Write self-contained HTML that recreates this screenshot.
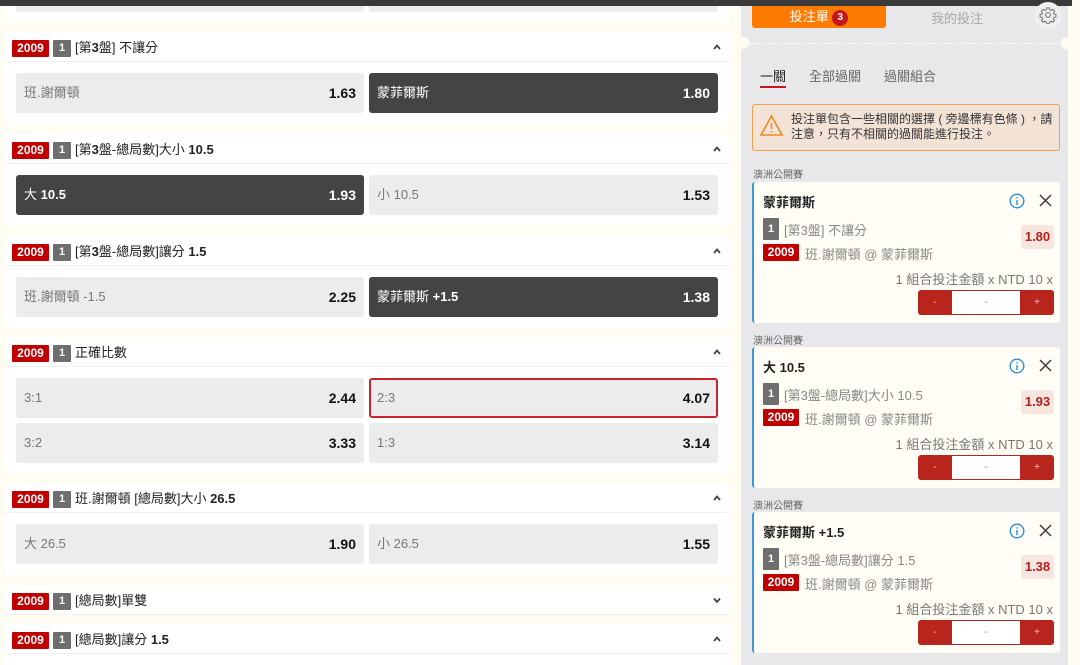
<!DOCTYPE html>
<html><head><meta charset="utf-8"><style>
*{box-sizing:border-box;margin:0;padding:0}
body{width:1080px;height:665px;overflow:hidden;background:#fffcf2;font-family:"Liberation Sans","Noto Sans CJK TC",sans-serif;position:relative}
.a{position:absolute}
.topbar{left:0;top:0;width:1072px;height:6px;background:#3a3a3a;z-index:5}
.panel{position:absolute;left:5px;width:724px;background:#fff}
.hdr{position:absolute;left:0;top:0;width:724px;height:30px;border-bottom:1px solid #f0f0f2}
.b09{position:absolute;left:7px;top:8px;width:37px;height:17px;background:#c00000;color:#fff;font-size:12px;font-weight:bold;text-align:center;line-height:17px;border-radius:1px}
.b1{position:absolute;left:48px;top:8px;width:18px;height:17px;background:#6e6e6e;color:#fff;font-size:11px;font-weight:bold;text-align:center;line-height:17px;border-radius:1px}
.ht{position:absolute;left:70px;top:7px;font-size:13px;color:#222;line-height:18px}
.ht b{font-weight:bold}
.car{position:absolute;right:8px;top:12px}
.btn{position:absolute;height:40px;background:#ececec;border-radius:3px;font-size:13px;line-height:40px;color:#777;padding:0 8px}
.btn span{float:right;color:#111;font-weight:bold;font-size:14px}
.btn.dk{background:#444;color:#fff}
.btn.dk span{color:#fff}
.btn.sel{border:2px solid #c8242a;line-height:36px;padding:0 6px}
.side{left:741px;top:6px;width:327px;height:659px;background:#e8e8ea}
.card{position:absolute;left:752px;width:308px;height:141px;background:#fffdf5;border-left:2px solid #3a9ad9;border-radius:3px}
.lab{position:absolute;left:753px;font-size:10px;color:#666}
.ct{position:absolute;left:9px;top:10px;font-size:13px;font-weight:bold;color:#222}
.s1{position:absolute;left:9px;top:36px;width:16px;height:22px;background:#6e6e6e;color:#fff;font-size:11px;font-weight:bold;text-align:center;line-height:22px;border-radius:1px}
.s1t{position:absolute;left:30px;top:38px;font-size:13px;color:#888}
.s2{position:absolute;left:9px;top:62px;width:36px;height:17px;background:#c00000;color:#fff;font-size:12px;font-weight:bold;text-align:center;line-height:17px;border-radius:1px}
.s2t{position:absolute;left:51px;top:62px;font-size:13px;color:#888}
.odd{position:absolute;left:267px;top:43px;width:33px;height:24px;background:#f6e6df;color:#b5201c;font-size:13px;font-weight:bold;text-align:center;line-height:24px;border-radius:3px}
.amt{position:absolute;right:7px;top:87px;font-size:13px;color:#777}
.stp{position:absolute;left:164px;top:108px;width:136px;height:25px;border-radius:3px;overflow:hidden;background:#b8251d}
.stp i{position:absolute;left:34px;top:1px;width:68px;height:23px;background:#fff;font-style:normal;color:#999;font-size:11px;text-align:center;line-height:23px}
.stp em{position:absolute;top:0;width:34px;font-style:normal;color:#f3c0bb;font-size:10px;text-align:center;line-height:25px}
.ic{position:absolute;top:11px}
</style></head><body>
<div class="a topbar"></div>

<div class="panel" style="top:0;height:22px">
<div class="btn" style="left:11px;top:-28px;width:348px"></div>
<div class="btn" style="left:364px;top:-28px;width:349px"></div>
</div>

<div class="panel" style="top:32px;height:92px">
<div class="hdr"><div class="b09">2009</div><div class="b1">1</div><div class="ht">[第<b>3</b>盤] 不讓分</div><svg class="car" width="8" height="6" viewBox="0 0 8 6"><path d="M1 5L4 1.5 7 5" fill="none" stroke="#444" stroke-width="1.8"/></svg></div>
<div class="btn" style="left:11px;top:41px;width:348px">班.謝爾頓<span>1.63</span></div>
<div class="btn dk" style="left:364px;top:41px;width:349px">蒙菲爾斯<span>1.80</span></div>
</div>

<div class="panel" style="top:134px;height:92px">
<div class="hdr"><div class="b09">2009</div><div class="b1">1</div><div class="ht">[第<b>3</b>盤-總局數]大小 <b>10.5</b></div><svg class="car" width="8" height="6" viewBox="0 0 8 6"><path d="M1 5L4 1.5 7 5" fill="none" stroke="#444" stroke-width="1.8"/></svg></div>
<div class="btn dk" style="left:11px;top:41px;width:348px">大 <b>10.5</b><span>1.93</span></div>
<div class="btn" style="left:364px;top:41px;width:349px">小 10.5<span>1.53</span></div>
</div>

<div class="panel" style="top:236px;height:92px">
<div class="hdr"><div class="b09">2009</div><div class="b1">1</div><div class="ht">[第<b>3</b>盤-總局數]讓分 <b>1.5</b></div><svg class="car" width="8" height="6" viewBox="0 0 8 6"><path d="M1 5L4 1.5 7 5" fill="none" stroke="#444" stroke-width="1.8"/></svg></div>
<div class="btn" style="left:11px;top:41px;width:348px">班.謝爾頓 -1.5<span>2.25</span></div>
<div class="btn dk" style="left:364px;top:41px;width:349px">蒙菲爾斯 <b>+1.5</b><span>1.38</span></div>
</div>

<div class="panel" style="top:337px;height:136px">
<div class="hdr"><div class="b09">2009</div><div class="b1">1</div><div class="ht">正確比數</div><svg class="car" width="8" height="6" viewBox="0 0 8 6"><path d="M1 5L4 1.5 7 5" fill="none" stroke="#444" stroke-width="1.8"/></svg></div>
<div class="btn" style="left:11px;top:41px;width:348px">3:1<span>2.44</span></div>
<div class="btn sel" style="left:364px;top:41px;width:349px">2:3<span>4.07</span></div>
<div class="btn" style="left:11px;top:86px;width:348px">3:2<span>3.33</span></div>
<div class="btn" style="left:364px;top:86px;width:349px">1:3<span>3.14</span></div>
</div>

<div class="panel" style="top:483px;height:92px">
<div class="hdr"><div class="b09">2009</div><div class="b1">1</div><div class="ht">班.謝爾頓 [總局數]大小 <b>26.5</b></div><svg class="car" width="8" height="6" viewBox="0 0 8 6"><path d="M1 5L4 1.5 7 5" fill="none" stroke="#444" stroke-width="1.8"/></svg></div>
<div class="btn" style="left:11px;top:41px;width:348px">大 26.5<span>1.90</span></div>
<div class="btn" style="left:364px;top:41px;width:349px">小 26.5<span>1.55</span></div>
</div>

<div class="panel" style="top:585px;height:30px">
<div class="hdr"><div class="b09">2009</div><div class="b1">1</div><div class="ht">[總局數]單雙</div><svg class="car" width="8" height="6" viewBox="0 0 8 6"><path d="M1 1.5L4 5 7 1.5" fill="none" stroke="#444" stroke-width="1.8"/></svg></div>
</div>

<div class="panel" style="top:624px;height:41px">
<div class="hdr"><div class="b09">2009</div><div class="b1">1</div><div class="ht">[總局數]讓分 <b>1.5</b></div><svg class="car" width="8" height="6" viewBox="0 0 8 6"><path d="M1 5L4 1.5 7 5" fill="none" stroke="#444" stroke-width="1.8"/></svg></div>
</div>

<div class="a side"></div>
<div class="a" style="left:752px;top:5px;width:134px;height:23px;background:#ff7b00;border-radius:0 0 3px 3px;color:#fff;font-size:13px;text-align:center;line-height:23px">投注單 <span style="display:inline-block;width:16px;height:16px;border-radius:8px;background:#c4161c;font-size:10px;line-height:16px;font-weight:bold;vertical-align:1px">3</span></div>
<div class="a" style="left:931px;top:8px;font-size:13px;color:#aaa">我的投注</div>
<div class="a" style="left:1034px;top:2px;width:28px;height:28px;border-radius:14px;background:#efeff1;z-index:6"></div>
<svg class="a" style="left:1039px;top:6px;z-index:7" width="18" height="18" viewBox="0 0 24 24" fill="none" stroke="#777" stroke-width="1.4"><circle cx="12" cy="12" r="3.2"/><path d="M10.3 2.5h3.4l.5 2.6 1.9.8 2.2-1.5 2.4 2.4-1.5 2.2.8 1.9 2.6.5v3.4l-2.6.5-.8 1.9 1.5 2.2-2.4 2.4-2.2-1.5-1.9.8-.5 2.6h-3.4l-.5-2.6-1.9-.8-2.2 1.5-2.4-2.4 1.5-2.2-.8-1.9-2.6-.5v-3.4l2.6-.5.8-1.9-1.5-2.2 2.4-2.4 2.2 1.5 1.9-.8z"/></svg>
<div class="a" style="left:748px;top:43px;width:314px;border-top:1px dashed #fff"></div>
<div class="a" style="left:737px;top:37px;width:12px;height:12px;border-radius:6px;background:#fffcf2"></div>
<div class="a" style="left:1061px;top:37px;width:12px;height:12px;border-radius:6px;background:#fffcf2"></div>
<div class="a" style="left:760px;top:66px;font-size:13px;color:#222">一關</div>
<div class="a" style="left:760px;top:86px;width:26px;height:2px;background:#c4161c"></div>
<div class="a" style="left:809px;top:66px;font-size:13px;color:#666">全部過關</div>
<div class="a" style="left:884px;top:66px;font-size:13px;color:#666">過關組合</div>
<div class="a" style="left:752px;top:104px;width:308px;height:47px;background:#f3e3d6;border:1px solid #f0a050;border-radius:3px"></div>
<svg class="a" style="left:759px;top:114px" width="25" height="23" viewBox="0 0 25 23" fill="none" stroke="#f08a20" stroke-width="1.6"><path d="M12.5 2L23 21H2z"/><path d="M12.5 9v6M12.5 17v1.5"/></svg>
<div class="a" style="left:791px;top:112px;width:262px;font-size:12px;color:#333;line-height:15px">投注單包含一些相關的選擇 ( 旁邊標有色條 ) ，請注意，只有不相關的過關能進行投注。</div>

<div class="lab" style="top:166px">澳洲公開賽</div>
<div class="card" style="top:182px">
<div class="ct">蒙菲爾斯</div>
<svg class="ic" style="left:255px" width="16" height="16" viewBox="0 0 16 16" fill="none" stroke="#2a8fe0" stroke-width="1.4"><circle cx="8" cy="8" r="6.8"/><path d="M8 7v5M8 4.2v1.4"/></svg>
<svg class="ic" style="left:285px;top:12px" width="13" height="13" viewBox="0 0 13 13" stroke="#333" stroke-width="1.4"><path d="M1 1L12 12M12 1L1 12"/></svg>
<div class="s1">1</div><div class="s1t">[第3盤] 不讓分</div>
<div class="s2">2009</div><div class="s2t">班.謝爾頓 @ 蒙菲爾斯</div>
<div class="odd">1.80</div>
<div class="amt">1 組合投注金額 x NTD 10 x</div>
<div class="stp"><em style="left:0">-</em><i>-</i><em style="left:102px">+</em></div>
</div>

<div class="lab" style="top:332px">澳洲公開賽</div>
<div class="card" style="top:347px">
<div class="ct">大 10.5</div>
<svg class="ic" style="left:255px" width="16" height="16" viewBox="0 0 16 16" fill="none" stroke="#2a8fe0" stroke-width="1.4"><circle cx="8" cy="8" r="6.8"/><path d="M8 7v5M8 4.2v1.4"/></svg>
<svg class="ic" style="left:285px;top:12px" width="13" height="13" viewBox="0 0 13 13" stroke="#333" stroke-width="1.4"><path d="M1 1L12 12M12 1L1 12"/></svg>
<div class="s1">1</div><div class="s1t">[第3盤-總局數]大小 10.5</div>
<div class="s2">2009</div><div class="s2t">班.謝爾頓 @ 蒙菲爾斯</div>
<div class="odd">1.93</div>
<div class="amt">1 組合投注金額 x NTD 10 x</div>
<div class="stp"><em style="left:0">-</em><i>-</i><em style="left:102px">+</em></div>
</div>

<div class="lab" style="top:497px">澳洲公開賽</div>
<div class="card" style="top:512px">
<div class="ct">蒙菲爾斯 +1.5</div>
<svg class="ic" style="left:255px" width="16" height="16" viewBox="0 0 16 16" fill="none" stroke="#2a8fe0" stroke-width="1.4"><circle cx="8" cy="8" r="6.8"/><path d="M8 7v5M8 4.2v1.4"/></svg>
<svg class="ic" style="left:285px;top:12px" width="13" height="13" viewBox="0 0 13 13" stroke="#333" stroke-width="1.4"><path d="M1 1L12 12M12 1L1 12"/></svg>
<div class="s1">1</div><div class="s1t">[第3盤-總局數]讓分 1.5</div>
<div class="s2">2009</div><div class="s2t">班.謝爾頓 @ 蒙菲爾斯</div>
<div class="odd">1.38</div>
<div class="amt">1 組合投注金額 x NTD 10 x</div>
<div class="stp"><em style="left:0">-</em><i>-</i><em style="left:102px">+</em></div>
</div>
</body></html>
